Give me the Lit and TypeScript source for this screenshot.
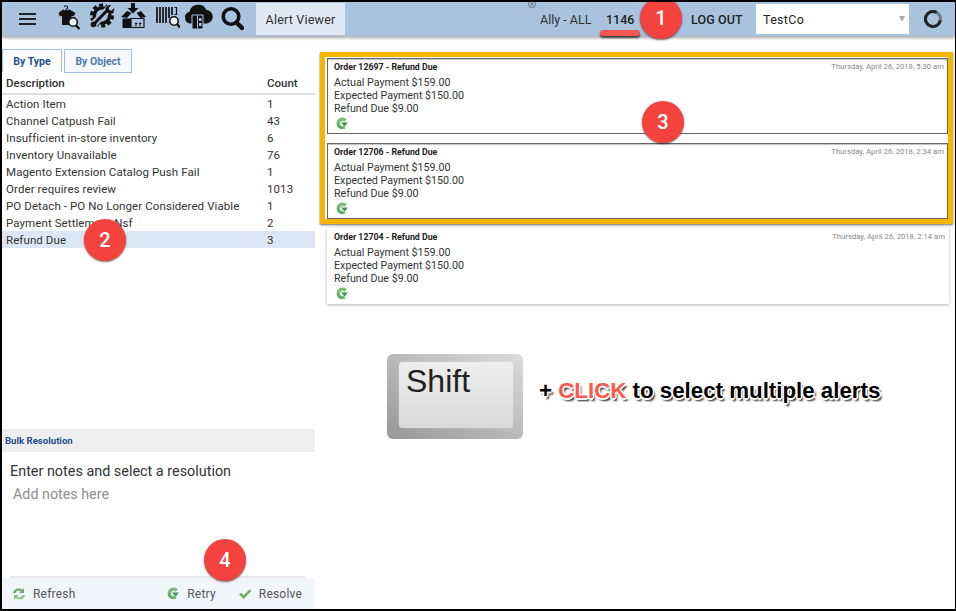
import { LitElement, html, css, svg } from "lit";
import { customElement } from "lit/decorators.js";

const BG = "#a9c2de";

const retryIcon = html`<svg class="retry" width="12" height="13" viewBox="0 0 12 13">
  <path d="M9.600 3.600A4.200 4.200 0 1 0 8.800 9.900" fill="none" stroke="#79bf78" stroke-width="3.400"/>
  <path d="M4.800 5.400H12L8.700 9.400z" fill="#3c9455"/>
  <path d="M1.800 6.500A4.300 4.300 0 0 0 6.500 11" fill="none" stroke="#4ba25c" stroke-width="1.400"/>
</svg>`;

const refreshIcon = html`<svg width="16" height="14" viewBox="0 0 15 14">
  <path d="M1.500 6C2 3 4.500 1.500 7 1.500c1.600 0 2.800.5 3.600 1.400L12.500 1v5H7.800l1.600-1.700C8.800 3.800 8 3.600 7.200 3.600 5.600 3.600 4.500 4.500 4 6z" fill="#62ad63"/>
  <path d="M13.500 8C13 11 10.500 12.500 8 12.500c-1.600 0-2.800-.5-3.600-1.400L2.500 13V8h4.700l-1.600 1.700c.6.5 1.400.7 2.200.7 1.600 0 2.700-.9 3.200-2.400z" fill="#8cc78a"/>
</svg>`;

const checkIcon = html`<svg width="14" height="12" viewBox="0 0 14 12">
  <path d="M1 6.500l2.400-1.700 2.100 2.500L11.500 1.500 13.300 3 5.700 11z" fill="#6fae5e"/>
</svg>`;

/* Each icon: [width, left gap, shapes]; the viewBox is width x 34. */
const headerIcons: [number, number, unknown][] = [
  [24, 0, svg`
    <path d="M9 9V7.500c2.500-1 1.800-3.800 0-3.800-1 0-1.500.7-1.500 1.400" fill="none" stroke="#111" stroke-width="1.100"/>
    <path d="M6 7.500l3 1.300 3.500-1.300 6 3.500-2 3.500-2-.8V20H15v3H5V13.500l-2 1-1.500-3.500z" fill="#111"/>
    <circle cx="16" cy="20" r="4.300" fill="#eef3f8" stroke="#111" stroke-width="1.600"/>
    <path d="M19 23.500l3.500 3.500" stroke="#111" stroke-width="2.400"/>`],
  [28, 7, svg`
    <circle cx="14" cy="13.500" r="10.500" fill="none" stroke="#111" stroke-width="3" stroke-dasharray="4 2.600"/>
    <circle cx="14" cy="13.500" r="7.700" fill="none" stroke="#111" stroke-width="3.600"/>
    <path d="M4.500 23.500L23 4.500" stroke="${BG}" stroke-width="7"/>
    <path d="M6 22L19.500 8" stroke="#111" stroke-width="3"/>
    <circle cx="5.500" cy="22.500" r="2.800" fill="#111"/>
    <path d="M17.500 8.500c-.5-3 2-5.700 5.700-5.500l-2.700 3 .8 2 2.200.7 2.800-2.700c.3 3.500-3 6.300-6.300 5.300z" fill="#111"/>`],
  [25, 5, svg`
    <path d="M10 1h4v5h3.500L12 11.500 6.500 6H10z" fill="#111"/>
    <path d="M0 15l6-6 4.500 2L6 16zM25 15l-5-6-4.500 2 4 5z" fill="#111"/>
    <path d="M1.500 16.500h8.500V26H1.500z" fill="#111"/>
    <path d="M10 16.500h13V25.500H10z" fill="none" stroke="#111" stroke-width="1.200"/>
    <path d="M15 20.500v4M19 20.500v4M14 21.500h2.400M18 21.500h2.400" stroke="#111" stroke-width="1"/>`],
  [25, 9, svg`
    <path d="M2 5v16M5 5v16M8 5v16M11 5v16M14 5v11M17 5v8" stroke="#111" stroke-width="1.700" fill="none"/>
    <path d="M19.500 5.500h2v7h-2" fill="none" stroke="#111" stroke-width="1.200"/>
    <circle cx="19" cy="19" r="4.200" fill="#eef3f8" stroke="#111" stroke-width="1.600"/>
    <path d="M22 22l3 3.500" stroke="#111" stroke-width="2.400"/>`],
  [29, 4, svg`
    <path d="M7 21.500a6 6 0 0 1-1.500-11.800 9 9 0 0 1 17-1.700 6.800 6.800 0 0 1 .5 13.500z" fill="#111"/>
    <path d="M8 13h11v14H8z" fill="#111" stroke="${BG}" stroke-width="1"/>
    <path d="M13.500 13.500v13" stroke="${BG}" stroke-width="1"/>
    <path d="M15 16h2.500v3H15zM15 21h2.500v3H15z" fill="${BG}"/>`],
  [23, 8, svg`
    <circle cx="10" cy="14.500" r="7.800" fill="none" stroke="#111" stroke-width="3.600"/>
    <path d="M15.500 20.500l5.500 5.500" stroke="#111" stroke-width="4.400" stroke-linecap="round"/>`],
];

const rows: [string, string][] = [
  ["Action Item", "1"],
  ["Channel Catpush Fail", "43"],
  ["Insufficient in-store inventory", "6"],
  ["Inventory Unavailable", "76"],
  ["Magento Extension Catalog Push Fail", "1"],
  ["Order requires review", "1013"],
  ["PO Detach - PO No Longer Considered Viable", "1"],
  ["Payment Settlement Nsf", "2"],
  ["Refund Due", "3"],
];

const alertCard = (order: string, date: string, framed: boolean) => html`
  <div class="card ${framed ? "framed" : ""}">
    <div class="card-top"><b>Order ${order} - Refund Due</b><span class="date">${date}</span></div>
    <div class="card-body">Actual Payment $159.00<br />Expected Payment $150.00<br />Refund Due $9.00</div>
    <div class="card-icon">${retryIcon}</div>
  </div>`;

@customElement("app-root")
export class AppRoot extends LitElement {
  static styles = css`
    :host {
      display: block;
      width: 956px;
      height: 611px;
      box-sizing: border-box;
      border: 2px solid #000;
      border-right-width: 1px;
      position: relative;
      overflow: hidden;
      background: #fff;
      font-family: Roboto, "Liberation Sans", sans-serif;
      color: #222;
    }
    .header {
      height: 34px;
      background: #a9c2de;
      box-shadow: 0 2px 3px rgba(0, 0, 0, 0.35);
      display: flex;
      align-items: center;
      position: relative;
      z-index: 1;
    }
    .menu {
      width: 17px;
      height: 12px;
      margin-left: 17px;
      border-top: 2px solid #222;
      border-bottom: 2px solid #222;
      box-sizing: border-box;
      position: relative;
      margin-right: 21px;
    }
    .menu::after {
      content: "";
      position: absolute;
      left: 0;
      right: 0;
      top: 3px;
      height: 2px;
      background: #222;
    }
    .hicons { display: flex; align-items: center; }
    .hicons svg { display: block; height: 34px; }
    .viewer {
      margin-left: 12px;
      width: 89px;
      height: 32px;
      background: #dfe8f3;
      font-size: 12.500px;
      letter-spacing: 0.2px;
      display: flex;
      align-items: center;
      justify-content: center;
      color: #333;
    }
    .h-right {
      margin-left: auto;
      display: flex;
      align-items: center;
      height: 100%;
      font-size: 12.500px;
    }
    .ally { color: #333; position: relative; width: 66px; white-space: nowrap; }
    .ally-x {
      position: absolute;
      left: -12px;
      top: -12px;
      display: block;
    }
    .num { font-weight: 500; color: #222; width: 85px; }
    .logout { font-weight: 500; width: 65px; letter-spacing: 0.1px; font-size: 12.500px; white-space: nowrap; }
    .select {
      width: 153px;
      height: 30px;
      background: #fff;
      display: flex;
      align-items: center;
      justify-content: space-between;
      padding: 0 4px 0 7px;
      box-sizing: border-box;
      font-size: 12.500px;
      letter-spacing: 0.3px;
    }
    .caret {
      width: 0;
      height: 0;
      border-left: 3.500px solid transparent;
      border-right: 3.500px solid transparent;
      border-top: 6px solid #aaa;
    }
    .spinner { display: block; margin: 0 13px 0 15px; }
    .main { display: flex; height: 573px; }
    .left {
      width: 313px;
      flex: none;
      display: flex;
      flex-direction: column;
      font-size: 11.500px;
      color: #333;
    }
    .tabs { display: flex; gap: 2px; padding-top: 13px; height: 23px; }
    .tab {
      width: 60px;
      height: 23px;
      box-sizing: border-box;
      border: 1px solid #9cbfe8;
      border-bottom: none;
      background: #f6f9fc;
      font-weight: 700;
      font-size: 10.500px;
      color: #4f79ab;
      display: flex;
      align-items: center;
      justify-content: center;
    }
    .tab.on { color: #1d4f91; background: #fff; }
    .tab + .tab { width: 68px; border-bottom: 1px solid #9cbfe8; height: 24px; }
    .thead {
      display: flex;
      height: 23px;
      align-items: center;
      font-weight: 500;
      font-size: 11.500px;
      padding-top: 1px;
      border-bottom: 2px solid #ddd;
      box-sizing: border-box;
      color: #333;
    }
    .c1 { width: 265px; padding-left: 4px; box-sizing: border-box; flex: none; white-space: nowrap; }
    .row { display: flex; height: 17px; align-items: center; letter-spacing: 0.09px; }
    .row.sel { background: #dce7f5; }
    .spacer { flex: 1; }
    .bulk-h {
      height: 23px;
      background: #eeeeee;
      font-size: 9.600px;
      font-weight: 700;
      color: #1d4f91;
      display: flex;
      align-items: center;
      padding-left: 3px;
    }
    .bulk-t { font-size: 14.400px; padding: 12px 0 0 8px; color: #333; line-height: 16px; }
    .bulk-p { font-size: 14.300px; padding: 6px 0 0 11px; color: #8e8e8e; line-height: 16px; height: 90px; }
    .foot-line { height: 2px; background: #e9e9e9; margin: 0 10px 0 8px; }
    .foot {
      height: 31px;
      background: #f2f6fb;
      display: flex;
      align-items: center;
      padding: 0 13px 0 9px;
      font-size: 12px;
      color: #555;
      letter-spacing: 0.2px;
    }
    .fbtn { display: flex; align-items: center; gap: 6px; }
    .fbtn svg { display: block; }
    .foot .push { margin-left: auto; gap: 8px; }
    .foot .res { margin-left: 22px; gap: 7px; }
    .right { flex: 1; padding: 16px 2px 0 5px; min-width: 0; }
    .frame {
      border: 5px solid #f8b500;
      padding: 1px 0 0 2px;
      margin: 0 0 4px 0;
      box-shadow: 0 1px 2px rgba(0, 0, 0, 0.6);
      display: flex;
      flex-direction: column;
      gap: 9px;
    }
    .card {
      height: 76px;
      padding: 2px 3px 0 6px;
      box-sizing: border-box;
      background: #fff;
      font-size: 10.700px;
      color: #333;
      border: 1px solid transparent;
    }
    .card.framed { border-color: #666; box-shadow: inset 0 1px 1px rgba(0, 0, 0, 0.25); }
    .card-top { display: flex; justify-content: space-between; font-size: 8.800px; line-height: 12px; }
    .card-top b { color: #222; font-weight: 700; }
    .date { color: #888; font-size: 7.700px; }
    .card-body { line-height: 13px; margin-top: 3px; }
    .card-icon { padding: 2px 0 0 2px; }
    .card-icon svg { display: block; }
    .plainwrap { margin: 0 4px 0 7px; box-shadow: 0 1px 3px rgba(0, 0, 0, 0.3); }
    .hint {
      display: flex;
      align-items: center;
      margin: 50px 0 0 67px;
    }
    .key {
      width: 136px;
      height: 85px;
      box-sizing: border-box;
      border-radius: 6px;
      background: linear-gradient(to bottom left, #dcdcdc, #979797);
      padding: 8px 10px 11px 12px;
      flex: none;
    }
    .key-top {
      height: 100%;
      border-radius: 4px;
      background: linear-gradient(to bottom, #eeeeee, #d9d9d9);
      font-family: "Liberation Sans", Arial, sans-serif;
      font-size: 32px;
      line-height: 34px;
      padding: 2px 0 0 7px;
      color: #222;
      box-sizing: border-box;
      box-shadow: 0 0 1px #fff;
    }
    .hint-text {
      margin-left: 16px;
      padding-bottom: 11px;
      font-family: "Liberation Sans", Arial, sans-serif;
      font-weight: 700;
      font-size: 22.300px;
      color: #000;
      white-space: nowrap;
      text-shadow: -1.500px 0 0 #fff, 1.500px 0 0 #fff, 0 -1.500px 0 #fff, 0 1.500px 0 #fff,
        -1px -1px 0 #fff, 1px -1px 0 #fff, -1px 1px 0 #fff, 1px 1px 0 #fff,
        2px 3px 2px #222;
    }
    .hint-text em { font-style: normal; color: #fa5a50; }
    .badge {
      position: absolute;
      width: 42px;
      height: 42px;
      border-radius: 50%;
      background: #f4423e;
      color: #fff;
      font-size: 20px;
      font-weight: 500;
      display: flex;
      align-items: center;
      justify-content: center;
      box-shadow: 0 1px 2px rgba(0, 0, 0, 0.55);
      z-index: 3;
    }
    .b1 { left: 638px; top: -5px; }
    .b2 { left: 82px; top: 217px; }
    .b3 { left: 640px; top: 99px; }
    .b4 { left: 202px; top: 537px; }
    .underline {
      position: absolute;
      left: 598px;
      top: 28px;
      width: 40px;
      height: 6px;
      background: #f4574f;
      border-radius: 3px;
      box-shadow: 0 2px 2px rgba(0, 0, 0, 0.65);
      z-index: 3;
    }
  `;

  render() {
    return html`
      <div class="header">
        <div class="menu"></div>
        <div class="hicons">
          ${headerIcons.map(
            ([w, gap, shapes]) =>
              html`<svg style="margin-left:${gap}px;width:${w}px" viewBox="0 0 ${w} 34">${shapes}</svg>`
          )}
        </div>
        <div class="viewer">Alert Viewer</div>
        <div class="h-right">
          <div class="ally">
            <svg class="ally-x" width="8" height="8" viewBox="0 0 8 8">
              <circle cx="4" cy="4" r="3.500" fill="none" stroke="#666" stroke-width="0.800"/>
              <path d="M2.500 2.500l3 3M5.500 2.500l-3 3" stroke="#666" stroke-width="0.800"/>
            </svg>
            Ally - ALL
          </div>
          <div class="num">1146</div>
          <div class="logout">LOG OUT</div>
          <div class="select">TestCo<span class="caret"></span></div>
          <svg class="spinner" width="18" height="18" viewBox="0 0 18 18">
            <circle cx="9" cy="9" r="7.500" fill="none" stroke="#6d7c8d" stroke-width="3"/>
            <path d="M12.500 2.400A7.500 7.500 0 1 0 16.300 10.500" fill="none" stroke="#222" stroke-width="3"/>
          </svg>
        </div>
      </div>
      <div class="main">
        <div class="left">
          <div class="tabs">
            <div class="tab on">By Type</div>
            <div class="tab">By Object</div>
          </div>
          <div class="thead"><div class="c1">Description</div><div>Count</div></div>
          <div class="rows">
            ${rows.map(
              ([d, c]) => html`<div class="row ${d === "Refund Due" ? "sel" : ""}">
                <div class="c1">${d}</div><div>${c}</div>
              </div>`
            )}
          </div>
          <div class="spacer"></div>
          <div class="bulk-h">Bulk Resolution</div>
          <div class="bulk-t">Enter notes and select a resolution</div>
          <div class="bulk-p">Add notes here</div>
          <div class="foot-line"></div>
          <div class="foot">
            <div class="fbtn">${refreshIcon}<span>Refresh</span></div>
            <div class="fbtn push">${retryIcon}<span>Retry</span></div>
            <div class="fbtn res">${checkIcon}<span>Resolve</span></div>
          </div>
        </div>
        <div class="right">
          <div class="frame">
            ${alertCard("12697", "Thursday, April 26, 2018, 5:30 am", true)}
            ${alertCard("12706", "Thursday, April 26, 2018, 2:34 am", true)}
          </div>
          <div class="plainwrap">
            ${alertCard("12704", "Thursday, April 26, 2018, 2:14 am", false)}
          </div>
          <div class="hint">
            <div class="key"><div class="key-top">Shift</div></div>
            <div class="hint-text">+ <em>CLICK</em> to select multiple alerts</div>
          </div>
        </div>
      </div>
      <div class="underline"></div>
      <div class="badge b1">1</div>
      <div class="badge b2">2</div>
      <div class="badge b3">3</div>
      <div class="badge b4">4</div>
    `;
  }
}
